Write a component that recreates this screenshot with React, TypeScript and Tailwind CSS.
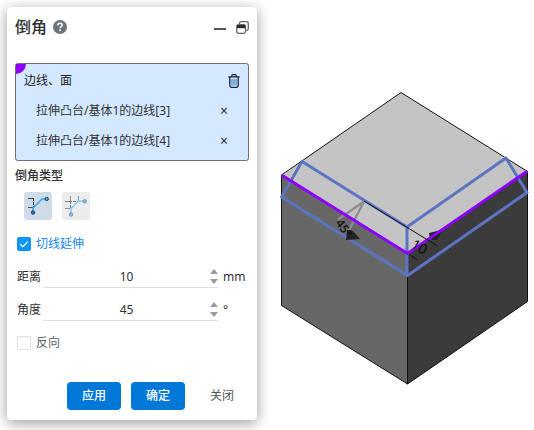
import { useState } from "react";

function HelpIcon() {
  return (
    <svg viewBox="0 0 14 14" className="size-3.5" aria-hidden="true">
      <circle cx="7" cy="7" r="7" fill="#6c757d" />
      <path d="M4.9 5.4c0-1.3.9-2.1 2.1-2.1s2.1.8 2.1 1.9c0 1.6-2 1.5-2 3.1" fill="none" stroke="#fff" strokeWidth="1.5" />
      <circle cx="7.1" cy="10.3" r="1" fill="#fff" />
    </svg>
  );
}

function RestoreIcon() {
  return (
    <svg viewBox="0 0 13 13" className="size-[13px]" fill="none" stroke="#666" aria-hidden="true">
      <path d="M3.5 3V2.5Q3.500 .7 5.300 .7h5.200Q12.300 .7 12.300 2.500v5.200Q12.300 9.500 10.500 9.500" strokeWidth="1.3" />
      <rect x="0.7" y="3.7" width="8.8" height="8.6" rx="1.8" strokeWidth="1.3" />
      <path d="M1 4h8.2v3.200H1z" fill="#2b2b2b" stroke="none" />
    </svg>
  );
}

function TrashIcon() {
  return (
    <svg viewBox="0 0 12 14" className="h-3.5 w-3" fill="none" stroke="#18233f" aria-hidden="true">
      <path d="M0.3 2.8h11.4M3.8 2.5V1.6q0-.9.9-.9h2.6q.9 0 .9.9v.9" strokeWidth="1.3" />
      <path d="M1.8 3v8.6q0 1.7 1.6 1.7h5.2q1.6 0 1.6-1.7V3" strokeWidth="1.3" />
      <path d="M4 5v6.500M6 5v6.500M8 5v6.500" stroke="#2676b8" />
    </svg>
  );
}

function OffsetTypeIcon() {
  return (
    <svg viewBox="0 0 28 28" className="size-7" fill="none" aria-hidden="true">
      <path d="M4 6.5h5.5M4 15.5h5" stroke="#444b52" />
      <path d="M9.5 6v9" stroke="#33383d" strokeDasharray="3 1" />
      <path d="M9 20v-4l9-9h4" stroke="#35a4f3" strokeWidth="1.5" />
      <circle cx="22.7" cy="7" r="1.7" fill="#4aa3df" stroke="#21466b" />
      <circle cx="9" cy="20.5" r="1.7" fill="#2f7dbb" stroke="#1d3a59" />
    </svg>
  );
}

function VertexTypeIcon() {
  return (
    <svg viewBox="0 0 28 28" className="size-7" fill="none" aria-hidden="true">
      <path d="M3 9.5h4M3 16.5h5M8.5 4v5M16.5 4v5" stroke="#8c8c8c" />
      <path d="M7 9.5h9M8.5 9v7" stroke="#777" strokeDasharray="3 1" />
      <path d="M9 22v-5.500L16.500 9H22" stroke="#7fcbf8" strokeWidth="1.5" />
      <circle cx="22.7" cy="9.3" r="1.7" fill="#8cc6ec" stroke="#6c8fae" />
      <circle cx="9" cy="22.5" r="1.7" fill="#8cc6ec" stroke="#6c8fae" />
    </svg>
  );
}

function Check({ id, label, checked, onChange }: { id: string; label: string; checked: boolean; onChange: () => void }) {
  return (
    <div className="flex h-5 items-center gap-[5px] pl-0.5">
      <span className="relative flex size-3.5">
        <input
          id={id}
          type="checkbox"
          checked={checked}
          onChange={onChange}
          className="size-3.5 appearance-none rounded-xs border border-[#dcdfe6] bg-white checked:border-[#0c96fa] checked:bg-[#0c96fa]"
        />
        {checked && (
          <svg viewBox="0 0 14 14" className="pointer-events-none absolute inset-0" aria-hidden="true">
            <path d="M3.3 7.2l2.6 2.5 4.900-5" fill="none" stroke="#fff" strokeWidth="1.2" />
          </svg>
        )}
      </span>
      <label htmlFor={id} className={checked ? "text-[#1485f5]" : "text-[#606266]"}>
        {label}
      </label>
    </div>
  );
}

function NumberRow({ id, label, initial, unit }: { id: string; label: string; initial: number; unit: string }) {
  const [value, setValue] = useState(initial);
  return (
    <div className="flex h-[22px] items-center pl-0.5">
      <label htmlFor={id} className="w-[26px] shrink-0">
        {label}
      </label>
      <div className="flex h-[22px] min-w-0 flex-1 items-center border-b border-[#dcdfe6]">
        <input
          id={id}
          value={value}
          onChange={(e) => setValue(Number(e.target.value) || 0)}
          className="min-w-0 flex-1 bg-transparent text-center outline-none"
        />
        <div className="flex w-2 flex-col gap-[5px]">
          <button type="button" aria-label={label + " +"} onClick={() => setValue(value + 1)}>
            <svg viewBox="0 0 8 5" className="h-[5px] w-2"><path d="M0 5L4 0l4 5z" fill="#9b9b9b" /></svg>
          </button>
          <button type="button" aria-label={label + " -"} onClick={() => setValue(value - 1)}>
            <svg viewBox="0 0 8 5" className="h-[5px] w-2"><path d="M0 0l4 5 4-5z" fill="#9b9b9b" /></svg>
          </button>
        </div>
      </div>
      <span className="w-[31px] shrink-0 pl-[5px]">{unit}</span>
    </div>
  );
}

function Model() {
  return (
    <svg viewBox="257 0 277 430" className="block w-full" fill="none">
      <path d="M401 92.5L281.5 175 407.5 253.5 527.5 171.5z" fill="#c4c4c4" />
      <path d="M281.5 175V305.5L407.5 384V253.5z" fill="#676767" />
      <path d="M407.5 253.5V384L527.5 301.5V171.5z" fill="#3b3b3b" />
      <path d="M281.5 175L401 92.5 527.5 171.5V301.5L407.5 384 281.5 305.5zM407.5 253.5V384" stroke="#111" />
      <path d="M429 233L443 229.5 437 240 430 240z" fill="#222" />
      <g stroke="#5d74c2" strokeWidth="3" strokeLinejoin="round">
        <path d="M281.5 197L302 161.5 407 227 506 158 527 192.5 407.5 275.5z" />
        <path d="M407 227V275.5" />
      </g>
      <path d="M338 219.5L364 201.5 347 234" stroke="#8f8f8f" strokeWidth="2.5" />
      <path d="M281.5 175L407.5 253.5 527.5 171" stroke="#8b00ff" strokeWidth="3" />
      <path d="M364 201L437.5 246M409 254.5L417.5 260" stroke="#111" />
      <path d="M347 230L353 231 360 239 346 240z" fill="#222" />
      <g fill="#0a0a0a" fontFamily="'Noto Sans', sans-serif">
        <text x="410" y="247" fontSize="14" transform="rotate(31 410 247)">10</text>
        <text x="335" y="223" fontSize="12" fontWeight="500" transform="rotate(54 335 223)">45°</text>
      </g>
    </svg>
  );
}

const EDGES = ["拉伸凸台/基体1的边线[3]", "拉伸凸台/基体1的边线[4]"];

export default function App() {
  const [edges, setEdges] = useState(EDGES);
  const [tangent, setTangent] = useState(true);
  const [reverse, setReverse] = useState(false);
  const [type, setType] = useState(0);

  return (
    <main className="flex items-start bg-white font-['Noto_Sans','Noto_Sans_CJK_SC',sans-serif] text-xs text-[#303133]">
      <section className="my-[7px] ml-[7px] w-[250px] shrink-0 rounded-[4px] bg-white px-2 pt-2 pb-2.5 shadow-[0_3px_14px_rgba(0,0,0,0.4)]">
        <header className="mb-6 flex h-6 items-center">
          <h1 className="text-base font-medium">倒角</h1>
          <button type="button" aria-label="帮助" className="ml-1.5">
            <HelpIcon />
          </button>
          <button type="button" aria-label="最小化" className="ml-auto flex h-3.5 w-3 items-center pt-1">
            <span className="h-0.5 w-full bg-[#555]" />
          </button>
          <button type="button" aria-label="还原" className="ml-2.5">
            <RestoreIcon />
          </button>
        </header>

        <div className="relative rounded-[3px] border border-[#6b7078] bg-[#d4e8ff] pt-0.5 pb-1">
          <span className="absolute top-0 left-0 size-2.5 rounded-br-full bg-[#8b00ff]" />
          <div className="flex h-[30px] items-center justify-between pr-2 pl-2 text-[#1d2129]">
            <span>边线、面</span>
            <button type="button" aria-label="全部删除" onClick={() => setEdges([])}>
              <TrashIcon />
            </button>
          </div>
          <ul>
            {edges.map((edge) => (
              <li key={edge} className="flex h-[30px] items-center justify-between pr-5 pl-5">
                <span>{edge}</span>
                <button type="button" aria-label="删除" className="text-sm leading-4" onClick={() => setEdges(edges.filter((e) => e !== edge))}>
                  ×
                </button>
              </li>
            ))}
          </ul>
        </div>

        <h2 className="mt-[5px] h-5 leading-5 font-medium">倒角类型</h2>
        <div className="mt-1.5 flex gap-2.5 pl-[9px]">
          <button type="button" aria-label="偏移距离" aria-pressed={type === 0} onClick={() => setType(0)} className="rounded-[3px] bg-[#cfdce7]">
            <OffsetTypeIcon />
          </button>
          <button type="button" aria-label="顶点" aria-pressed={type === 1} onClick={() => setType(1)} className="rounded-[3px] bg-[#ececec]">
            <VertexTypeIcon />
          </button>
        </div>

        <div className="mt-3.5">
          <Check id="tangent" label="切线延伸" checked={tangent} onChange={() => setTangent(!tangent)} />
        </div>
        <div className="mt-3 flex flex-col gap-[11px]">
          <NumberRow id="distance" label="距离" initial={10} unit="mm" />
          <NumberRow id="angle" label="角度" initial={45} unit="°" />
        </div>
        <div className="mt-3">
          <Check id="reverse" label="反向" checked={reverse} onChange={() => setReverse(!reverse)} />
        </div>

        <footer className="mt-[29px] flex justify-end gap-2.5">
          <button type="button" className="h-7 w-[54px] rounded-[4px] bg-[#0078d7] font-medium text-white">应用</button>
          <button type="button" className="h-7 w-[54px] rounded-[4px] bg-[#0078d7] font-medium text-white">确定</button>
          <button type="button" className="h-7 w-[54px] text-[#555]">关闭</button>
        </footer>
      </section>
      <div className="min-w-0 flex-1">
        <Model />
      </div>
    </main>
  );
}
